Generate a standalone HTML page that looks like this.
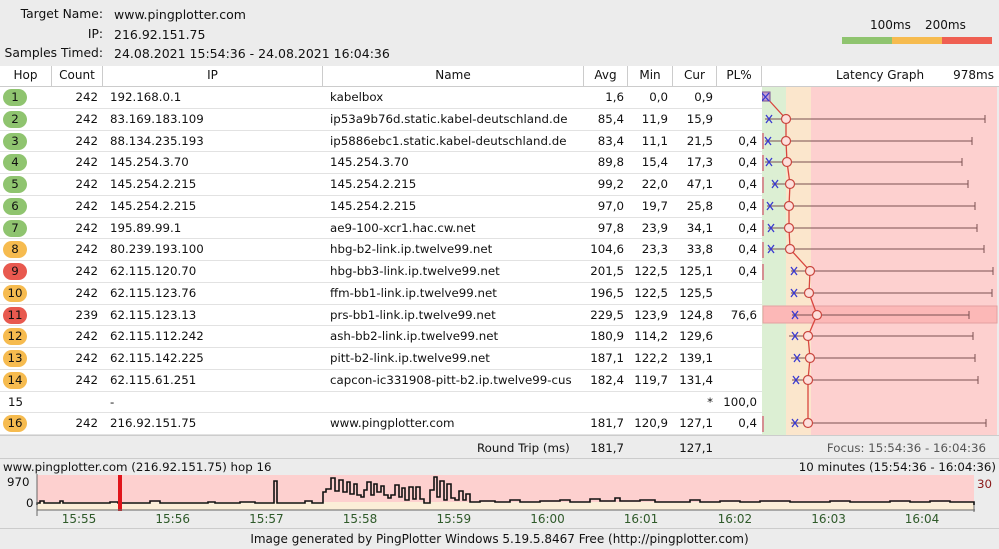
<!DOCTYPE html>
<html><head><meta charset="utf-8"><style>
*{margin:0;padding:0;box-sizing:border-box}
body{width:999px;height:549px;background:#ececec;font-family:"DejaVu Sans","Liberation Sans",sans-serif;font-size:11.8px;color:#111;position:relative;overflow:hidden}
.a{position:absolute;white-space:nowrap}
.r{text-align:right}
.c{text-align:center}
.hd{position:absolute;top:66px;height:21px;background:#fff;border-right:1px solid #ccc;border-bottom:1px solid #ccc;line-height:19px;text-align:center;font-size:12px}
.row{position:absolute;left:0;width:762px;height:21.75px;background:#fff;border-bottom:1px solid #e2e2e2}
.row span{position:absolute;top:3px;line-height:15px;white-space:nowrap}
.hop{left:3px;width:24px;height:17px;border-radius:9px;text-align:center;top:2px!important;line-height:17px!important}
.g{background:#8fc46f}.o{background:#f6bb4f}.rd{background:#e8594f}
</style></head><body>
<div class="a r" style="left:0;width:103px;top:7px;font-size:12.3px">Target Name:</div>
<div class="a" style="left:114px;top:7px;font-size:12.5px">www.pingplotter.com</div>
<div class="a r" style="left:0;width:103px;top:27px;font-size:12.3px">IP:</div>
<div class="a" style="left:114px;top:27px;font-size:12.5px">216.92.151.75</div>
<div class="a r" style="left:0;width:103px;top:46px;font-size:12.3px">Samples Timed:</div>
<div class="a" style="left:114px;top:46px;font-size:12.5px">24.08.2021 15:54:36 - 24.08.2021 16:04:36</div>
<div class="a" style="left:870px;top:18px;font-size:12px">100ms</div>
<div class="a" style="left:925px;top:18px;font-size:12px">200ms</div>
<div class="a" style="left:842px;top:37px;width:50px;height:7px;background:#8fc46f"></div>
<div class="a" style="left:892px;top:37px;width:50px;height:7px;background:#f6bb4f"></div>
<div class="a" style="left:942px;top:37px;width:50px;height:7px;background:#ef5f52"></div>

<div class="hd" style="left:0;width:52px">Hop</div>
<div class="hd" style="left:52px;width:51px">Count</div>
<div class="hd" style="left:103px;width:220px">IP</div>
<div class="hd" style="left:323px;width:261px">Name</div>
<div class="hd" style="left:584px;width:44px">Avg</div>
<div class="hd" style="left:628px;width:45px">Min</div>
<div class="hd" style="left:673px;width:44px">Cur</div>
<div class="hd" style="left:717px;width:45px">PL%</div>
<div class="hd" style="left:762px;width:237px;border-right:none"><span style="position:absolute;left:74px">Latency Graph</span><span style="position:absolute;right:5px">978ms</span></div>

<div class="row" style="top:87px"><span class="hop g">1</span><span class="r" style="left:52px;width:46px">242</span><span style="left:110px">192.168.0.1</span><span style="left:330px">kabelbox</span><span class="r" style="left:584px;width:40px">1,6</span><span class="r" style="left:628px;width:40px">0,0</span><span class="r" style="left:673px;width:40px">0,9</span></div>
<div class="row" style="top:108.75px"><span class="hop g">2</span><span class="r" style="left:52px;width:46px">242</span><span style="left:110px">83.169.183.109</span><span style="left:330px">ip53a9b76d.static.kabel-deutschland.de</span><span class="r" style="left:584px;width:40px">85,4</span><span class="r" style="left:628px;width:40px">11,9</span><span class="r" style="left:673px;width:40px">15,9</span></div>
<div class="row" style="top:130.5px"><span class="hop g">3</span><span class="r" style="left:52px;width:46px">242</span><span style="left:110px">88.134.235.193</span><span style="left:330px">ip5886ebc1.static.kabel-deutschland.de</span><span class="r" style="left:584px;width:40px">83,4</span><span class="r" style="left:628px;width:40px">11,1</span><span class="r" style="left:673px;width:40px">21,5</span><span class="r" style="left:717px;width:40px">0,4</span></div>
<div class="row" style="top:152.25px"><span class="hop g">4</span><span class="r" style="left:52px;width:46px">242</span><span style="left:110px">145.254.3.70</span><span style="left:330px">145.254.3.70</span><span class="r" style="left:584px;width:40px">89,8</span><span class="r" style="left:628px;width:40px">15,4</span><span class="r" style="left:673px;width:40px">17,3</span><span class="r" style="left:717px;width:40px">0,4</span></div>
<div class="row" style="top:174px"><span class="hop g">5</span><span class="r" style="left:52px;width:46px">242</span><span style="left:110px">145.254.2.215</span><span style="left:330px">145.254.2.215</span><span class="r" style="left:584px;width:40px">99,2</span><span class="r" style="left:628px;width:40px">22,0</span><span class="r" style="left:673px;width:40px">47,1</span><span class="r" style="left:717px;width:40px">0,4</span></div>
<div class="row" style="top:195.75px"><span class="hop g">6</span><span class="r" style="left:52px;width:46px">242</span><span style="left:110px">145.254.2.215</span><span style="left:330px">145.254.2.215</span><span class="r" style="left:584px;width:40px">97,0</span><span class="r" style="left:628px;width:40px">19,7</span><span class="r" style="left:673px;width:40px">25,8</span><span class="r" style="left:717px;width:40px">0,4</span></div>
<div class="row" style="top:217.5px"><span class="hop g">7</span><span class="r" style="left:52px;width:46px">242</span><span style="left:110px">195.89.99.1</span><span style="left:330px">ae9-100-xcr1.hac.cw.net</span><span class="r" style="left:584px;width:40px">97,8</span><span class="r" style="left:628px;width:40px">23,9</span><span class="r" style="left:673px;width:40px">34,1</span><span class="r" style="left:717px;width:40px">0,4</span></div>
<div class="row" style="top:239.25px"><span class="hop o">8</span><span class="r" style="left:52px;width:46px">242</span><span style="left:110px">80.239.193.100</span><span style="left:330px">hbg-b2-link.ip.twelve99.net</span><span class="r" style="left:584px;width:40px">104,6</span><span class="r" style="left:628px;width:40px">23,3</span><span class="r" style="left:673px;width:40px">33,8</span><span class="r" style="left:717px;width:40px">0,4</span></div>
<div class="row" style="top:261px"><span class="hop rd">9</span><span class="r" style="left:52px;width:46px">242</span><span style="left:110px">62.115.120.70</span><span style="left:330px">hbg-bb3-link.ip.twelve99.net</span><span class="r" style="left:584px;width:40px">201,5</span><span class="r" style="left:628px;width:40px">122,5</span><span class="r" style="left:673px;width:40px">125,1</span><span class="r" style="left:717px;width:40px">0,4</span></div>
<div class="row" style="top:282.75px"><span class="hop o">10</span><span class="r" style="left:52px;width:46px">242</span><span style="left:110px">62.115.123.76</span><span style="left:330px">ffm-bb1-link.ip.twelve99.net</span><span class="r" style="left:584px;width:40px">196,5</span><span class="r" style="left:628px;width:40px">122,5</span><span class="r" style="left:673px;width:40px">125,5</span></div>
<div class="row" style="top:304.5px"><span class="hop rd">11</span><span class="r" style="left:52px;width:46px">239</span><span style="left:110px">62.115.123.13</span><span style="left:330px">prs-bb1-link.ip.twelve99.net</span><span class="r" style="left:584px;width:40px">229,5</span><span class="r" style="left:628px;width:40px">123,9</span><span class="r" style="left:673px;width:40px">124,8</span><span class="r" style="left:717px;width:40px">76,6</span></div>
<div class="row" style="top:326.25px"><span class="hop o">12</span><span class="r" style="left:52px;width:46px">242</span><span style="left:110px">62.115.112.242</span><span style="left:330px">ash-bb2-link.ip.twelve99.net</span><span class="r" style="left:584px;width:40px">180,9</span><span class="r" style="left:628px;width:40px">114,2</span><span class="r" style="left:673px;width:40px">129,6</span></div>
<div class="row" style="top:348px"><span class="hop o">13</span><span class="r" style="left:52px;width:46px">242</span><span style="left:110px">62.115.142.225</span><span style="left:330px">pitt-b2-link.ip.twelve99.net</span><span class="r" style="left:584px;width:40px">187,1</span><span class="r" style="left:628px;width:40px">122,2</span><span class="r" style="left:673px;width:40px">139,1</span></div>
<div class="row" style="top:369.75px"><span class="hop o">14</span><span class="r" style="left:52px;width:46px">242</span><span style="left:110px">62.115.61.251</span><span style="left:330px">capcon-ic331908-pitt-b2.ip.twelve99-cus</span><span class="r" style="left:584px;width:40px">182,4</span><span class="r" style="left:628px;width:40px">119,7</span><span class="r" style="left:673px;width:40px">131,4</span></div>
<div class="row" style="top:391.5px"><span style="left:8px">15</span><span style="left:110px">-</span><span class="r" style="left:673px;width:40px">*</span><span class="r" style="left:717px;width:40px">100,0</span></div>
<div class="row" style="top:413.25px"><span class="hop o">16</span><span class="r" style="left:52px;width:46px">242</span><span style="left:110px">216.92.151.75</span><span style="left:330px">www.pingplotter.com</span><span class="r" style="left:584px;width:40px">181,7</span><span class="r" style="left:628px;width:40px">120,9</span><span class="r" style="left:673px;width:40px">127,1</span><span class="r" style="left:717px;width:40px">0,4</span></div>

<svg class="a" style="left:762px;top:87px" width="237" height="348" viewBox="762 87 237 348">
<rect x="762" y="87" width="24" height="348" fill="#dcefd3"/>
<rect x="786" y="87" width="25" height="348" fill="#fbe6cc"/>
<rect x="811" y="87" width="186" height="348" fill="#fdd0cf"/>
<rect x="763" y="306" width="234" height="17" fill="#fcb8b7" stroke="#e3a1a0"/>
<g fill="#d58f92"><rect x="762" y="133" width="2" height="16"/><rect x="762" y="155" width="2" height="16"/><rect x="762" y="177" width="2" height="16"/><rect x="762" y="199" width="2" height="16"/><rect x="762" y="220" width="2" height="16"/><rect x="762" y="242" width="2" height="16"/><rect x="762" y="264" width="2" height="16"/><rect x="762" y="416" width="2" height="16"/></g>
<g stroke="#7a5050" stroke-width="1" fill="none">
<path d="M765 119H985M985 115v8M765 141H972M972 137v8M765 162H962M962 158v8M772 184H968M968 180v8M767 206H975M975 202v8M768 228H977M977 224v8M768 249H984M984 245v8M791 271H993M993 267v8M791 293H992M992 289v8M792 315H969M969 311v8M789 336H973M973 332v8M791 358H975M975 354v8M792 380H978M978 376v8M791 423H986M986 419v8"/>
</g>
<path d="M766 97L786 119L786 141L787 162L790 184L789 206L789 228L790 249L810 271L809 293L817 315L808 336L810 358L808 380L808 423" stroke="#d9463e" stroke-width="1.3" fill="none"/>
<g stroke="#c9473f" stroke-width="1.2" fill="#fde0dc">
<circle cx="786" cy="119" r="4.5"/><circle cx="786" cy="141" r="4.5"/><circle cx="787" cy="162" r="4.5"/><circle cx="790" cy="184" r="4.5"/><circle cx="789" cy="206" r="4.5"/><circle cx="789" cy="228" r="4.5"/><circle cx="790" cy="249" r="4.5"/><circle cx="810" cy="271" r="4.5"/><circle cx="809" cy="293" r="4.5"/><circle cx="817" cy="315" r="4.5"/><circle cx="808" cy="336" r="4.5"/><circle cx="810" cy="358" r="4.5"/><circle cx="808" cy="380" r="4.5"/><circle cx="808" cy="423" r="4.5"/>
</g>
<rect x="762" y="92" width="8" height="9" fill="#c9a0d0" stroke="#7a5090"/>
<g stroke="#3a3ad0" stroke-width="1.3">
<path d="M762 93l7 8M769 93l-7 8M766 115l6 8M772 115l-6 8M765 137l6 8M771 137l-6 8M766 158l6 8M772 158l-6 8M772 180l6 8M778 180l-6 8M767 202l6 8M773 202l-6 8M768 224l6 8M774 224l-6 8M768 245l6 8M774 245l-6 8M791 267l6 8M797 267l-6 8M791 289l6 8M797 289l-6 8M792 311l6 8M798 311l-6 8M792 332l6 8M798 332l-6 8M794 354l6 8M800 354l-6 8M793 376l6 8M799 376l-6 8M792 419l6 8M798 419l-6 8"/>
</g>
</svg>

<div class="a" style="left:0;top:435px;width:999px;height:1px;background:#ccc"></div>
<div class="a" style="left:477px;top:441px">Round Trip (ms)</div>
<div class="a r" style="left:584px;top:441px;width:40px">181,7</div>
<div class="a r" style="left:673px;top:441px;width:40px">127,1</div>
<div class="a r" style="left:780px;top:441px;width:206px;color:#555">Focus: 15:54:36 - 16:04:36</div>
<div class="a" style="left:0;top:458px;width:999px;height:1px;background:#ccc"></div>
<div class="a" style="left:3px;top:460px">www.pingplotter.com (216.92.151.75) hop 16</div>
<div class="a r" style="left:700px;top:460px;width:296px">10 minutes (15:54:36 - 16:04:36)</div>
<div class="a" style="left:7px;top:475px">970</div>
<div class="a" style="left:26px;top:496px">0</div>
<div class="a" style="left:977px;top:477px;color:#8b1a1a">30</div>
<svg class="a" style="left:0;top:474px" width="999" height="56" viewBox="0 474 999 56">
<rect x="37" y="475" width="937" height="35" fill="#fdd0cf"/>
<rect x="37" y="502" width="937" height="8" fill="#fbeed8"/>
<path d="M37 505V503H40V501H44V503H60V501H63V503H110V502H118V503H150V501H160V503H208V502H215V503H240V502H255V503H274V481H277V503H305V501H312V503H323V492H326V489H331V478H335V491H339V480H343V492H347V482H350V494H354V484H357V495H361V497H364V490H367V482H371V495H374V484H377V492H381V486H384V495H388V498H391V495H395V485H399V497H402V488H405V500H409V487H413V499H416V487H420V499H424V503H430V490H434V477H437V497H440V481H444V500H447V484H451V498H455V500H459V491H463V500H466V494H470V502H480V501H495V502H510V500H520V502H540V501H560V500H570V502H590V499H600V501H615V498H620V501H640V500H655V502H690V500H700V502H720V501H740V502H760V501H790V502H830V501H850V502H890V501H910V502H930V501H950V502H974V505" fill="none" stroke="#111" stroke-width="1.6"/>
<rect x="118" y="475" width="4" height="36" fill="#e0141a"/>
<path d="M37 510H975M37 474V516M974 505V512" stroke="#666" stroke-width="1" fill="none"/>
<g font-family="DejaVu Sans,sans-serif" font-size="12" fill="#2f5a2a" text-anchor="middle">
<text x="79" y="523">15:55</text><text x="172.7" y="523">15:56</text><text x="266.4" y="523">15:57</text><text x="360" y="523">15:58</text><text x="453.8" y="523">15:59</text><text x="547.5" y="523">16:00</text><text x="641" y="523">16:01</text><text x="734.9" y="523">16:02</text><text x="828.6" y="523">16:03</text><text x="922" y="523">16:04</text>
</g>
</svg>
<div class="a" style="left:0;top:528px;width:999px;height:1px;background:#ccc"></div>
<div class="a c" style="left:0;top:532px;width:999px;font-size:12px">Image generated by PingPlotter Windows 5.19.5.8467 Free (http://pingplotter.com)</div>
</body></html>
